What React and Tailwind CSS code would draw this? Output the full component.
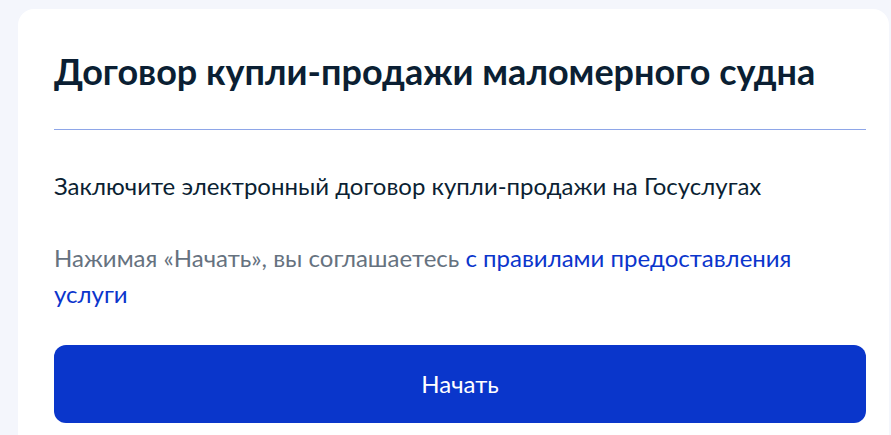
export default function App() {
  return (
    <div className="min-h-[435px] h-[435px] bg-[#f4f6fc] pl-[18px] pr-[2px] pt-[9px] overflow-hidden" style={{ fontFamily: 'Lato, "Noto Sans", sans-serif' }}>
      <div className="bg-white rounded-t-[16px] pl-[36px] pr-[23px] pt-[40px] pb-[40px] min-h-[500px]">
        <h1 className="text-[36px] leading-[44px] font-bold text-[#0b1f33]">Договор купли-продажи маломерного судна</h1>
        <div className="mt-[36px] h-px bg-[#8ea6e8]" />
        <p className="mt-[40px] text-[24px] leading-[32px] text-[#0b1f33]">Заключите электронный договор купли-продажи на Госуслугах</p>
        <p className="mt-[38px] text-[24px] leading-[36px] text-[#66727f]">
          Нажимая «Начать», вы соглашаетесь <a className="text-[#0b35cc]">с правилами предоставления услуги</a>
        </p>
        <button className="mt-[33px] w-full h-[78px] rounded-[12px] bg-[#0a36cb] text-white text-[24px]">Начать</button>
      </div>
    </div>
  );
}
